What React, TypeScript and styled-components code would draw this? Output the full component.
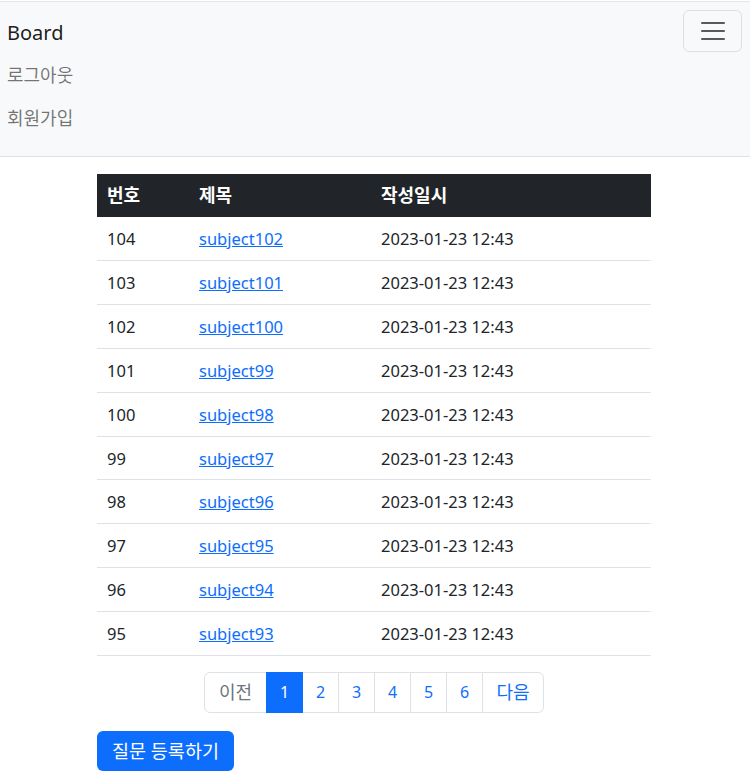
import React from "react";
import styled, { createGlobalStyle } from "styled-components";

const GlobalStyle = createGlobalStyle`
  body {
    margin: 0;
    font-family: "Noto Sans", "Noto Sans CJK KR", sans-serif;
    font-size: 16px;
    color: #212529;
    background: #ffffff;
  }
`;

const Navbar = styled.nav`
  margin-top: 1px;
  background: #f8f9fa;
  border-top: 1px solid #e3e6ea;
  border-bottom: 1px solid #dee2e6;
  padding: 8px 8px 18px 7px;
`;

const NavTop = styled.div`
  display: flex;
  align-items: center;
  justify-content: space-between;
  height: 42px;
`;

const Brand = styled.a`
  font-size: 20px;
  color: rgba(0, 0, 0, 0.9);
  text-decoration: none;
  margin-top: 3px;
`;

const Toggler = styled.button`
  width: 59px;
  height: 42px;
  background: transparent;
  border: 1px solid rgba(0, 0, 0, 0.1);
  border-radius: 6px;
  display: flex;
  align-items: center;
  justify-content: center;
  padding: 0;
`;

const NavList = styled.ul`
  list-style: none;
  margin: 0;
  padding: 0;
`;

const NavLink = styled.a`
  display: flex;
  align-items: center;
  height: 43px;
  font-size: 18px;
  color: rgba(0, 0, 0, 0.55);
  text-decoration: none;
`;

const Container = styled.main`
  max-width: 554px;
  margin: 17px auto 0;
  padding-right: 2px;
`;

const Table = styled.table`
  width: 100%;
  border-collapse: collapse;
  table-layout: fixed;
`;

const Th = styled.th<{ $w?: number }>`
  box-sizing: border-box;
  background: #212529;
  color: #ffffff;
  text-align: left;
  font-weight: 700;
  font-size: 18px;
  padding: 9px 10px;
  line-height: 25px;
  width: ${(p) => (p.$w ? `${p.$w}px` : "auto")};
`;

const Td = styled.td`
  padding: 11px 10px 9px;
  line-height: 22.9px;
  font-size: 16.5px;
  border-bottom: 1px solid #dee2e6;
`;

const SubjectLink = styled.a`
  color: #0d6efd;
  text-decoration: underline;
`;

const Pagination = styled.ul`
  display: flex;
  justify-content: center;
  list-style: none;
  margin: 16px 0 0;
  padding: 0;
`;

const PageItem = styled.li<{ $active?: boolean; $disabled?: boolean }>`
  padding: 7px 0;
  line-height: 25px;
  width: 37px;
  text-align: center;
  box-sizing: border-box;
  border: 1px solid ${(p) => (p.$active ? "#0d6efd" : "#dee2e6")};
  margin-left: -1px;
  color: ${(p) => (p.$active ? "#fff" : p.$disabled ? "#6c757d" : "#0d6efd")};
  background: ${(p) => (p.$active ? "#0d6efd" : "#fff")};
  position: ${(p) => (p.$active ? "relative" : "static")};
  &:first-child,
  &:last-child {
    width: 63px;
    font-size: 18px;
  }
  &:first-child {
    border-radius: 6px 0 0 6px;
    margin-left: 0;
  }
  &:last-child {
    width: 62px;
    border-radius: 0 6px 6px 0;
  }
`;

const PrimaryButton = styled.a`
  display: inline-block;
  margin-top: 18px;
  background: #0d6efd;
  color: #fff;
  border-radius: 6px;
  padding: 7px 15px;
  line-height: 26px;
  font-size: 18.5px;
  text-decoration: none;
`;

const rows = [
  [104, "subject102"],
  [103, "subject101"],
  [102, "subject100"],
  [101, "subject99"],
  [100, "subject98"],
  [99, "subject97"],
  [98, "subject96"],
  [97, "subject95"],
  [96, "subject94"],
  [95, "subject93"],
] as const;

export default function App() {
  return (
    <>
      <GlobalStyle />
      <Navbar>
        <NavTop>
          <Brand href="#">Board</Brand>
          <Toggler aria-label="menu">
            <svg width="30" height="30" viewBox="0 0 30 30">
              <path
                d="M4 7h22M4 15h22M4 23h22"
                stroke="rgba(33,37,41,0.75)"
                strokeWidth="2"
                strokeLinecap="round"
              />
            </svg>
          </Toggler>
        </NavTop>
        <NavList>
          <li>
            <NavLink href="#">로그아웃</NavLink>
          </li>
          <li>
            <NavLink href="#">회원가입</NavLink>
          </li>
        </NavList>
      </Navbar>
      <Container>
        <Table>
          <thead>
            <tr>
              <Th $w={92}>번호</Th>
              <Th $w={182}>제목</Th>
              <Th>작성일시</Th>
            </tr>
          </thead>
          <tbody>
            {rows.map(([n, s]) => (
              <tr key={n}>
                <Td>{n}</Td>
                <Td>
                  <SubjectLink href="#">{s}</SubjectLink>
                </Td>
                <Td>2023-01-23 12:43</Td>
              </tr>
            ))}
          </tbody>
        </Table>
        <Pagination>
          <PageItem $disabled>이전</PageItem>
          <PageItem $active>1</PageItem>
          <PageItem>2</PageItem>
          <PageItem>3</PageItem>
          <PageItem>4</PageItem>
          <PageItem>5</PageItem>
          <PageItem>6</PageItem>
          <PageItem>다음</PageItem>
        </Pagination>
        <PrimaryButton href="#">질문 등록하기</PrimaryButton>
      </Container>
    </>
  );
}
